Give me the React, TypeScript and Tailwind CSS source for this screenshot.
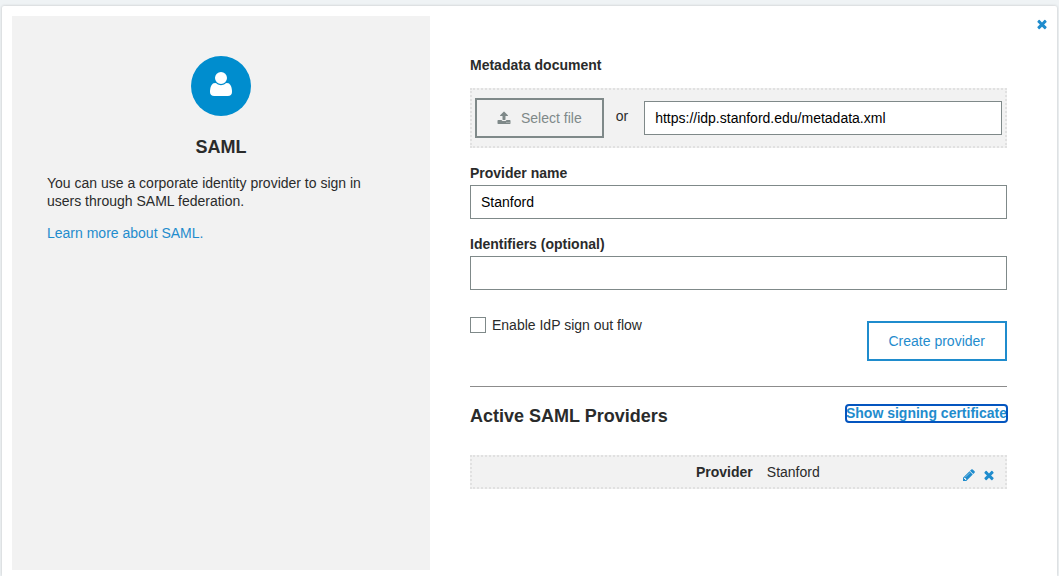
import { useState } from "react";

const ICONS = {
  user: "M1600 1405q0 120-73 189.5t-194 69.5h-874q-121 0-194-69.5t-73-189.5q0-53 3.5-103.5t14-109 26.5-108.5 43-97.5 62-81 85.5-53.5 111.5-20q9 0 42 21.5t74.5 48 108 48 133.5 21.5 133.5-21.5 108-48 74.5-48 42-21.5q61 0 111.5 20t85.5 53.5 62 81 43 97.5 26.5 108.5 14 109 3.5 103.5zm-320-893q0 159-112.5 271.5t-271.5 112.5-271.5-112.5-112.5-271.5 112.5-271.5 271.5-112.5 271.5 112.5 112.5 271.5z",
  upload:
    "M1344 1472q0-26-19-45t-45-19-45 19-19 45 19 45 45 19 45-19 19-45zm256 0q0-26-19-45t-45-19-45 19-19 45 19 45 45 19 45-19 19-45zm128-224v320q0 40-28 68t-68 28h-1472q-40 0-68-28t-28-68v-320q0-40 28-68t68-28h427q21 56 70.5 92t110.5 36h256q61 0 110.5-36t70.5-92h427q40 0 68 28t28 68zm-325-648q-17 40-59 40h-256v448q0 26-19 45t-45 19h-256q-26 0-45-19t-19-45v-448h-256q-42 0-59-40-17-39 14-69l448-448q18-19 45-19t45 19l448 448q31 30 14 69z",
  pencil:
    "M491 1536l91-91-235-235-91 91v107h128v128h107zm523-928q0-22-22-22-10 0-17 7l-542 542q-7 7-7 17 0 22 22 22 10 0 17-7l542-542q7-7 7-17zm-54-192l416 416-832 832h-416v-416zm683 96q0 53-37 90l-166 166-416-416 166-165q36-38 90-38 53 0 91 38l235 234q37 39 37 91z",
  close:
    "M1490 1322q0 40-28 68l-136 136q-28 28-68 28t-68-28l-294-294-294 294q-28 28-68 28t-68-28l-136-136q-28-28-28-68t28-68l294-294-294-294q-28-28-28-68t28-68l136-136q28-28 68-28t68 28l294 294 294-294q28-28 68-28t68 28l136 136q28 28 28 68t-28 68l-294 294 294 294q28 28 28 68z",
};

function Icon({ name, className }: { name: keyof typeof ICONS; className: string }) {
  return (
    <svg viewBox="0 0 1792 1792" fill="currentColor" aria-hidden="true" className={className}>
      <path d={ICONS[name]} />
    </svg>
  );
}

const inputClass = "h-[34px] border border-[#7f8989] bg-white px-2.5 text-black";

function InfoPanel() {
  return (
    <aside className="w-2/5 bg-[#f2f2f2] px-[35px] pt-10">
      <div className="mx-auto flex size-15 items-center justify-center rounded-full bg-[#008dce] pb-1 text-white">
        <Icon name="user" className="size-7" />
      </div>
      <h1 className="mt-5 text-center text-lg leading-[22px] font-bold">SAML</h1>
      <p className="mt-4">
        You can use a corporate identity provider to sign in users through SAML federation.
      </p>
      <p className="mt-3.5">
        <a href="#learn" className="text-[#1f8ccd]">
          Learn more about SAML.
        </a>
      </p>
    </aside>
  );
}

export default function App() {
  const [url, setUrl] = useState("https://idp.stanford.edu/metadata.xml");
  const [name, setName] = useState("Stanford");
  const [identifiers, setIdentifiers] = useState("");
  const [signOut, setSignOut] = useState(false);

  return (
    <div className="bg-[#eff3f5] px-0.5 pt-1.5 font-['Liberation_Sans',Arial,sans-serif] text-sm leading-[18px] text-[#2a2b2b]">
      <main className="relative flex min-h-[calc(100vh-6px)] rounded-t-xs bg-white pt-2.5 pb-1.5 pl-2.5 shadow-[0_0_3px_rgba(0,0,0,0.2)]">
        <InfoPanel />
        <button
          type="button"
          aria-label="Close"
          className="absolute top-[11px] right-2 text-[#1f8ccd]"
        >
          <Icon name="close" className="size-3.5" />
        </button>
        <section className="w-3/5 pt-10 pr-[50px] pl-10">
          <label htmlFor="metadata" className="block font-bold">
            Metadata document
          </label>
          <div className="mt-3.5 flex h-15 items-center border-2 border-dotted border-[#e1e1e1] bg-[#f2f2f2] px-[3px]">
            <button
              type="button"
              className="flex h-10 items-center gap-2.5 border-2 border-[#7f8989] px-5 text-[#7f8989]"
            >
              <Icon name="upload" className="size-3.5" />
              Select file
            </button>
            <span className="mx-3 pb-1">or</span>
            <input
              id="metadata"
              value={url}
              onChange={(e) => setUrl(e.target.value)}
              className={`${inputClass} ml-1 min-w-0 flex-1`}
            />
          </div>

          <label htmlFor="name" className="mt-4 mb-[3px] block font-bold">
            Provider name
          </label>
          <input
            id="name"
            value={name}
            onChange={(e) => setName(e.target.value)}
            className={`${inputClass} block w-full`}
          />

          <label htmlFor="identifiers" className="mt-4 mb-[3px] block font-bold">
            Identifiers (optional)
          </label>
          <input
            id="identifiers"
            value={identifiers}
            onChange={(e) => setIdentifiers(e.target.value)}
            className={`${inputClass} block w-full`}
          />

          <div className="mt-[26px] flex items-start justify-between">
            <label className="flex items-center gap-1.5">
              <input
                type="checkbox"
                checked={signOut}
                onChange={(e) => setSignOut(e.target.checked)}
                className="size-4 appearance-none border border-[#7f8989] bg-white checked:bg-[#1f8ccd]"
              />
              Enable IdP sign out flow
            </label>
            <button
              type="button"
              className="mt-[5px] h-10 border-2 border-[#1f8ccd] px-5 text-[#1f8ccd]"
            >
              Create provider
            </button>
          </div>

          <hr className="mt-[25px] border-[#8c8c8c]" />

          <div className="mt-[18px] flex items-start justify-between">
            <h2 className="text-lg leading-[22px] font-bold">Active SAML Providers</h2>
            <a
              href="#certificate"
              className="rounded-[3px] leading-[17px] font-bold text-[#1f8ccd] outline-2 -outline-offset-1 outline-[#0455bf]"
            >
              Show signing certificate
            </a>
          </div>

          <div className="mt-7 grid h-[34px] grid-cols-2 items-center border-2 border-dotted border-[#e1e1e1] bg-[#f2f2f2]">
            <div className="flex gap-3.5 pl-56">
              <b>Provider</b>
              <span>Stanford</span>
            </div>
            <div className="flex justify-end gap-1.5 pt-1.5 pr-[9px] text-[#1f8ccd]">
              <button type="button" aria-label="Edit Stanford">
                <Icon name="pencil" className="size-3.5" />
              </button>
              <button type="button" aria-label="Delete Stanford">
                <Icon name="close" className="size-3.5" />
              </button>
            </div>
          </div>
        </section>
      </main>
    </div>
  );
}
